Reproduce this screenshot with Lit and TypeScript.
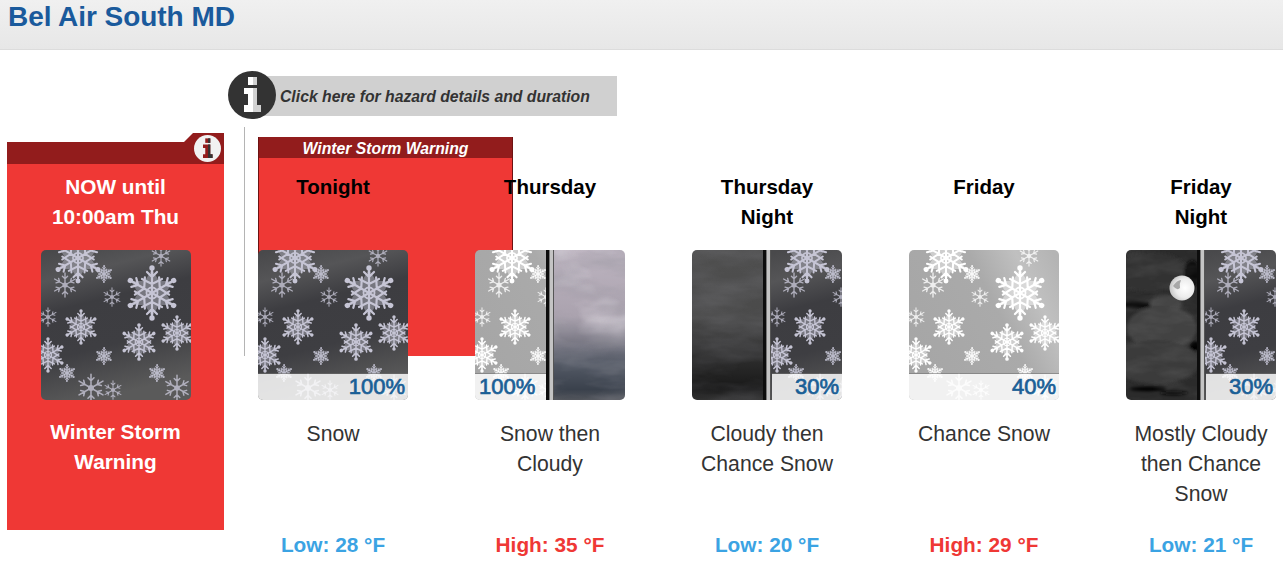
import { LitElement, html, css, svg } from "lit";
import { customElement } from "lit/decorators.js";

type Flake = [number, number, number, "rich" | "thin"];
const FLAKES: Flake[] = [
  [111, 43, 25, "rich"], [37, 8, 23, "rich"], [120, 6, 11, "thin"], [63, 24, 8, "rich"],
  [24, 35, 13, "thin"], [71, 47, 10, "thin"], [7, 67, 10, "thin"], [40, 77, 16, "rich"],
  [98, 92, 17, "rich"], [136, 83, 16, "rich"], [7, 105, 16, "rich"], [63, 106, 8, "rich"],
  [26, 123, 8, "rich"], [116, 123, 8, "rich"], [50, 138, 15, "thin"], [72, 140, 10, "thin"],
  [136, 138, 14, "thin"],
];
const ANGLES = [0, 60, 120, 180, 240, 300];

const defs = svg`
  <defs>
    <filter id="soft" x="-5%" y="-5%" width="110%" height="110%"><feGaussianBlur stdDeviation="0.6"/></filter>
    <filter id="softer" x="-20%" y="-20%" width="140%" height="140%"><feGaussianBlur stdDeviation="0.6"/></filter>
    <filter id="blur1" x="-30%" y="-30%" width="160%" height="160%"><feGaussianBlur stdDeviation="1.4"/></filter>
    <filter id="clouds" x="0" y="0" width="100%" height="100%">
      <feTurbulence type="fractalNoise" baseFrequency="0.014 0.045" numOctaves="4" seed="7"/>
      <feColorMatrix values="0 0 0 0 0.3  0 0 0 0 0.3  0 0 0 0 0.34  1.8 0 0 0 -0.65"/>
      <feComposite in2="SourceAlpha" operator="in"/>
    </filter>
    <filter id="cloudsHi" x="0" y="0" width="100%" height="100%">
      <feTurbulence type="fractalNoise" baseFrequency="0.018 0.035" numOctaves="3" seed="21"/>
      <feColorMatrix values="0 0 0 0 0.88  0 0 0 0 0.85  0 0 0 0 0.9  2.2 0 0 0 -0.95"/>
      <feComposite in2="SourceAlpha" operator="in"/>
    </filter>
    <filter id="nightTex" x="0" y="0" width="100%" height="100%">
      <feTurbulence type="fractalNoise" baseFrequency="0.03 0.08" numOctaves="3" seed="11"/>
      <feColorMatrix values="0 0 0 0 0.45  0 0 0 0 0.45  0 0 0 0 0.45  1.6 0 0 0 -0.6"/>
      <feComposite in2="SourceAlpha" operator="in"/>
    </filter>
    <linearGradient id="fadeGrad" x1="0" y1="0" x2="0" y2="1">
      <stop offset="0" stop-color="#fff"/><stop offset=".45" stop-color="#fff"/><stop offset=".68" stop-color="#000"/>
    </linearGradient>
    <mask id="fadeTop" maskUnits="userSpaceOnUse" x="0" y="0" width="150" height="150">
      <rect width="150" height="150" fill="url(#fadeGrad)"/>
    </mask>
    <linearGradient id="bgDark" x1="0.1" y1="0" x2="0.35" y2="1">
      <stop offset="0" stop-color="#49494b"/><stop offset=".18" stop-color="#555557"/>
      <stop offset=".38" stop-color="#3d3d41"/><stop offset=".68" stop-color="#3e3e42"/>
      <stop offset="1" stop-color="#5a5a5a"/>
    </linearGradient>
    <linearGradient id="bgLight" x1="0" y1="0.6" x2="1" y2="0.1">
      <stop offset="0" stop-color="#a6a6a6"/><stop offset=".55" stop-color="#aaaaaa"/>
      <stop offset=".8" stop-color="#c0c0c0"/><stop offset="1" stop-color="#b4b4b4"/>
    </linearGradient>
    <linearGradient id="bgCloud" x1="0" y1="0" x2="0" y2="1">
      <stop offset="0" stop-color="#bdb4c0"/><stop offset=".45" stop-color="#aaa2ae"/>
      <stop offset=".6" stop-color="#7d7b87"/><stop offset=".75" stop-color="#555b67"/>
      <stop offset=".93" stop-color="#3a414c"/><stop offset="1" stop-color="#52555c"/>
    </linearGradient>
    <linearGradient id="bgGrey" x1="0" y1="0" x2="0" y2="1">
      <stop offset="0" stop-color="#4f4f4f"/><stop offset=".45" stop-color="#4a4a4a"/>
      <stop offset=".62" stop-color="#373737"/><stop offset=".8" stop-color="#252525"/>
      <stop offset=".93" stop-color="#181818"/><stop offset="1" stop-color="#323232"/>
    </linearGradient>
    <radialGradient id="moon" cx=".62" cy=".5" r=".62">
      <stop offset="0" stop-color="#fff"/><stop offset=".6" stop-color="#ececec"/><stop offset="1" stop-color="#c4c4c4"/>
    </radialGradient>
    <clipPath id="clipLeft"><rect x="0" y="0" width="72" height="150"/></clipPath>
    <clipPath id="clipRight"><rect x="78" y="0" width="72" height="150"/></clipPath>
    <g id="rich">
      <polygon points="0,-24 7,-12 21,-12 14,0 21,12 7,12 0,24 -7,12 -21,12 -14,0 -21,-12 -7,-12" fill="currentColor" opacity=".42"/>
      ${ANGLES.map((a) => svg`
        <g transform="rotate(${a})" stroke="currentColor" fill="none" stroke-width="2.2" stroke-linecap="round">
          <path d="M0 0V-23M0 -16L-5 -21M0 -16L5 -21M0 -9L-10 -14M0 -9L10 -14"/>
          <circle cx="0" cy="-25" r="1.6" fill="currentColor"/>
        </g>`)}
      <circle r="5.5" fill="none" stroke="currentColor" stroke-width="1.8"/>
    </g>
    <g id="thin" opacity=".8">
      ${ANGLES.map((a) => svg`
        <g transform="rotate(${a})" stroke="currentColor" fill="none" stroke-width="2.6" stroke-linecap="round">
          <path d="M0 0V-23M0 -12L-5 -17M0 -12L5 -17"/>
        </g>`)}
      <circle r="5" fill="currentColor"/>
    </g>
  </defs>`;

function flakes(color: string) {
  return FLAKES.map(([x, y, r, kind]) => svg`
    <use href="#${kind}" color=${color} transform="translate(${x} ${y}) scale(${r / 25})"/>`);
}

function scene(kind: string) {
  switch (kind) {
    case "snowDark":
      return svg`<rect width="150" height="150" fill="url(#bgDark)"/><g filter="url(#soft)">${flakes("#c6c5d5")}</g>`;
    case "snowLight":
      return svg`<rect width="150" height="150" fill="url(#bgLight)"/><g filter="url(#soft)">${flakes("#ffffff")}</g>`;
    case "cloud":
      return svg`
        <rect width="150" height="150" fill="url(#bgCloud)"/>
        <g mask="url(#fadeTop)"><rect width="150" height="150" fill="#000" filter="url(#cloudsHi)" opacity=".6"/></g>
        <rect width="150" height="150" fill="#000" filter="url(#clouds)" opacity=".5"/>`;
    case "cloudDark":
      return svg`
        <rect width="150" height="150" fill="url(#bgGrey)"/>
        <rect width="150" height="150" fill="#000" filter="url(#clouds)" opacity=".25"/>`;
    default:
      return svg`
        <rect width="150" height="150" fill="#2b2b2b"/>
        <g filter="url(#blur1)">
          <ellipse cx="25" cy="22" rx="36" ry="20" fill="#323232"/>
          <ellipse cx="66" cy="24" rx="8" ry="14" fill="#080808"/>
          <ellipse cx="10" cy="55" rx="16" ry="3" fill="#000"/>
          <ellipse cx="40" cy="54" rx="16" ry="9" fill="#454545"/>
          <ellipse cx="36" cy="78" rx="35" ry="22" fill="#424242"/>
          <ellipse cx="30" cy="112" rx="44" ry="22" fill="#3a3a3a"/>
          <ellipse cx="69" cy="96" rx="5" ry="5" fill="#050505"/>
          <ellipse cx="22" cy="139" rx="18" ry="2.2" fill="#050505"/>
          <ellipse cx="48" cy="143" rx="14" ry="2.2" fill="#0a0a0a"/>
        </g>
        <rect width="72" height="150" fill="#000" filter="url(#nightTex)" opacity=".14"/>
        <circle cx="56" cy="38" r="12.5" fill="url(#moon)" filter="url(#softer)"/>
        <path d="M47 36q4 -6 8 -6q-2 4 -1 8q-3 3 -7 -2z" fill="#a8a8a8" filter="url(#softer)"/>`;
  }
}

function wx(left: string, right: string | null, pct: string | null, side: "left" | "right") {
  const [sx, sw] = right ? (side === "left" ? [0, 71] : [80, 70]) : [0, 150];
  return html`<svg class="wx" width="150" height="150" viewBox="0 0 150 150">
    ${right
      ? svg`
        <g clip-path="url(#clipLeft)">${scene(left)}</g>
        <g clip-path="url(#clipRight)">
          ${right.startsWith("snow") ? svg`<g transform="translate(78 0)">${scene(right)}</g>` : scene(right)}
        </g>`
      : scene(left)}
    ${pct
      ? svg`
        <rect x=${sx} y="124" width=${sw} height="26" class="strip"/>
        <rect x=${sx} y="123" width=${sw} height="1" class="strip-line"/>`
      : null}
    ${right
      ? svg`
        <rect x="71" width="3" height="150" fill="#0d0d0d"/>
        <rect x="74" width="1" height="150" fill="#777"/>
        <rect x="75" width="3" height="150" fill="#c4c4c4"/>
        <rect x="78" width="1" height="150" fill="#555"/>`
      : null}
    ${pct
      ? side === "left"
        ? svg`<text x="4" y="144" class="pct">${pct}</text>`
        : svg`<text x="147" y="144" text-anchor="end" class="pct">${pct}</text>`
      : null}
  </svg>`;
}

function infoIcon(cls: string) {
  return html`<svg class=${cls} viewBox="0 0 48 48" aria-hidden="true">
    <circle class="disc" cx="24" cy="24" r="24"/>
    <rect class="glyph" x="20" y="6" width="9" height="8"/>
    <path class="glyph" d="M16 17H29V34H33V41H16V34H20V23H16Z"/>
    <rect class="shade" x="25" y="6" width="4" height="8"/>
    <path class="shade" d="M25 17H29V34H33V41H25Z"/>
  </svg>`;
}

const DAYS = [
  { name: ["Tonight"], icon: () => wx("snowDark", null, "100%", "right"), desc: "Snow", temp: "Low: 28 °F", kind: "low" },
  { name: ["Thursday"], icon: () => wx("snowLight", "cloud", "100%", "left"), desc: "Snow then Cloudy", temp: "High: 35 °F", kind: "high" },
  { name: ["Thursday", "Night"], icon: () => wx("cloudDark", "snowDark", "30%", "right"), desc: "Cloudy then Chance Snow", temp: "Low: 20 °F", kind: "low" },
  { name: ["Friday"], icon: () => wx("snowLight", null, "40%", "right"), desc: "Chance Snow", temp: "High: 29 °F", kind: "high" },
  { name: ["Friday", "Night"], icon: () => wx("night", "snowDark", "30%", "right"), desc: "Mostly Cloudy then Chance Snow", temp: "Low: 21 °F", kind: "low" },
];

@customElement("app-root")
export class AppRoot extends LitElement {
  static styles = css`
    :host { display: block; font-family: "Liberation Sans", Arial, sans-serif; background: #fff; height: 575px; overflow: hidden; }
    .defs { display: block; width: 0; height: 0; }
    header { height: 49px; border-bottom: 1px solid #dcdcdc; background: linear-gradient(#f0f0f0, #e7e7e7); padding-left: 8px; }
    h1 { margin: 0; font-size: 28px; line-height: 33px; font-weight: 700; color: #1a5a9c; letter-spacing: -0.05px; }
    main { padding-top: 21px; }
    .hazard { display: flex; align-items: center; margin-left: 228px; height: 47px; }
    .hazard-icon { width: 48px; height: 48px; flex: none; position: relative; z-index: 1; }
    .hazard-icon .disc { fill: #333; }
    .hazard-icon .glyph { fill: #fff; }
    .hazard-icon .shade { fill: #d2d2d2; }
    .hazard-text { margin-left: -24px; width: 337px; height: 40px; padding-left: 28px; margin-top: 3px; background: #d0d0d0; color: #333; font-size: 15.75px; font-weight: 700; font-style: italic; line-height: 41px; white-space: nowrap; }
    .row { display: flex; align-items: flex-start; margin-top: 9px; position: relative; }
    .panel { position: relative; width: 217px; height: 388px; margin: 15px 0 0 7px; flex: none; background: #ef3835; color: #fff; font-size: 20.8px; font-weight: 700; line-height: 30px; text-align: center; }
    .band { height: 22px; background: #921c1c; }
    .tab { position: absolute; right: 0; top: -9px; width: 40px; height: 9px; background: #921c1c; clip-path: polygon(9px 0, 100% 0, 100% 100%, 0 100%); }
    .panel-icon { position: absolute; right: 3px; top: -7px; width: 27px; height: 27px; }
    .panel-icon .disc { fill: #f1f1f1; }
    .panel-icon .glyph { fill: #921c1c; }
    .panel-icon .shade { fill: #333; }
    .panel-when { margin-top: 8px; }
    .panel .image { margin: 18px auto 0; }
    .panel-title { margin-top: 17px; }
    .divider { width: 1px; height: 229px; margin-left: 20px; margin-right: 13px; flex: none; background: #b4b4b4; }
    .warn { position: absolute; left: 258px; top: 10px; width: 253px; height: 219px; background: #ef3835; border: solid #6d1212; border-width: 0 1px; }
    .warn-title { height: 21px; background: #921c1c; color: #fff; font-size: 15.75px; font-weight: 700; font-style: italic; line-height: 23px; text-align: center; white-space: nowrap; }
    .days { display: flex; gap: 67px; position: relative; }
    .day { width: 150px; padding-top: 45px; text-align: center; font-size: 21.2px; line-height: 30px; }
    .name { height: 60px; font-size: 20.5px; font-weight: 700; color: #000; white-space: nowrap; }
    .day .image { margin-top: 18px; }
    .image { width: 150px; height: 150px; border-radius: 5px; overflow: hidden; }
    .wx { display: block; }
    .strip { fill: rgba(255, 255, 255, 0.84); }
    .strip-line { fill: rgba(110, 110, 110, 0.55); }
    .pct { font: 400 22px "Liberation Sans", Arial, sans-serif; fill: #1a5f96; stroke: #1a5f96; stroke-width: 0.7px; }
    .desc { margin-top: 19px; height: 90px; color: #333; }
    .temp { margin-top: 21px; font-size: 20.8px; font-weight: 700; white-space: nowrap; }
    .low { color: #3ba3e3; }
    .high { color: #ef3835; }
  `;

  render() {
    return html`
      <svg class="defs" width="0" height="0">${defs}</svg>
      <header><h1>Bel Air South MD</h1></header>
      <main>
        <div class="hazard">
          ${infoIcon("hazard-icon")}
          <div class="hazard-text">Click here for hazard details and duration</div>
        </div>
        <div class="row">
          <section class="panel">
            <div class="tab"></div>
            <div class="band"></div>
            ${infoIcon("panel-icon")}
            <div class="panel-when">NOW until<br />10:00am Thu</div>
            <div class="image">${wx("snowDark", null, null, "right")}</div>
            <div class="panel-title">Winter Storm<br />Warning</div>
          </section>
          <div class="divider"></div>
          <div class="warn"><div class="warn-title">Winter Storm Warning</div></div>
          <div class="days">
            ${DAYS.map((d) => html`
              <article class="day">
                <div class="name">${d.name.map((n, i) => html`${i ? html`<br />` : ""}${n}`)}</div>
                <div class="image">${d.icon()}</div>
                <div class="desc">${d.desc}</div>
                <div class="temp ${d.kind}">${d.temp}</div>
              </article>`)}
          </div>
        </div>
      </main>
    `;
  }
}
